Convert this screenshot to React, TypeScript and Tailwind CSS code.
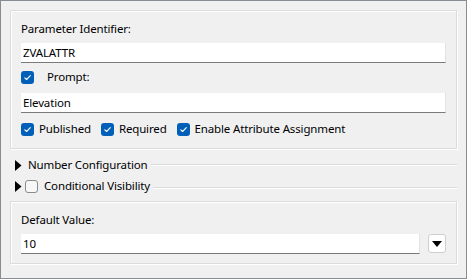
import React from "react";

const font = { fontFamily: '"Noto Sans", "Segoe UI", sans-serif' };

function Check({ checked = true }: { checked?: boolean }) {
  if (!checked) {
    return (
      <div className="w-[13px] h-[13px] rounded-[3px] border border-[#8b8b8b] bg-[#f7f7f7] shrink-0" />
    );
  }
  return (
    <div className="w-[13px] h-[13px] rounded-[3px] bg-[#005fb8] shrink-0 flex items-center justify-center">
      <svg width="9" height="9" viewBox="0 0 9 9">
        <path d="M1.8 4.8 L3.6 6.5 L7.3 2.6" fill="none" stroke="#fff" strokeWidth="1.1" strokeLinecap="round" strokeLinejoin="round" />
      </svg>
    </div>
  );
}

function Input({ value, className = "" }: { value: string; className?: string }) {
  return (
    <div
      className={`h-[20px] bg-white border-b border-b-[#7a7a7a] border-r border-r-[#e2e2e2] flex items-center pl-[2px] text-black ${className}`}
    >
      {value}
    </div>
  );
}

function Triangle() {
  return (
    <svg width="7" height="11" viewBox="0 0 7 11" className="shrink-0">
      <polygon points="0,0 6.5,5.5 0,11" fill="#000" />
    </svg>
  );
}

function Group({ children, className = "" }: { children: React.ReactNode; className?: string }) {
  return (
    <div
      className={`border border-[#dcdcdc] shadow-[inset_1px_1px_0_#ffffff,1px_1px_0_#ffffff] ${className}`}
    >
      {children}
    </div>
  );
}

export default function App() {
  return (
    <div
      style={font}
      className="w-[467px] h-[279px] bg-[#f0f0f0] border border-[#888d94] pt-[9px] px-[9px] text-[11.5px] tracking-[-0.15px] text-black leading-[16px] overflow-hidden"
    >
      <Group className="h-[139px] px-[10px] pt-[10px]">
        <div className="h-[16px] flex items-center">Parameter Identifier:</div>
        <Input value="ZVALATTR" className="mt-[6px]" />
        <div className="h-[16px] mt-[6px] flex items-center">
          <Check />
          <span className="ml-[13px]">Prompt:</span>
        </div>
        <Input value="Elevation" className="mt-[8px]" />
        <div className="h-[16px] mt-[8px] flex items-center">
          <Check />
          <span className="ml-[5px]">Published</span>
          <div className="ml-[10px]">
            <Check />
          </div>
          <span className="ml-[5px]">Required</span>
          <div className="ml-[10px]">
            <Check />
          </div>
          <span className="ml-[5px]">Enable Attribute Assignment</span>
        </div>
      </Group>

      <div className="h-[16px] mt-[8px] flex items-center pl-[5px] pr-[0px]">
        <Triangle />
        <span className="ml-[6px]">Number Configuration</span>
        <div className="flex-1 ml-[3px] h-[2px] border-t border-t-[#dcdcdc] border-b border-b-[#ffffff]" />
      </div>
      <div className="h-[16px] mt-[5px] flex items-center pl-[5px]">
        <Triangle />
        <div className="ml-[3px]">
          <Check checked={false} />
        </div>
        <span className="ml-[6px]">Conditional Visibility</span>
        <div className="flex-1 ml-[3px] h-[2px] mt-[4px] border-t border-t-[#dcdcdc] border-b border-b-[#ffffff]" />
      </div>

      <Group className="mt-[7px] h-[63px] px-[10px] pt-[10px]">
        <div className="h-[16px] flex items-center">Default Value:</div>
        <div className="mt-[6px] flex items-start">
          <Input value="10" className="flex-1" />
          <div className="ml-[8px] w-[18px] h-[19px] bg-white border border-[#cfcfcf] rounded-[3px] flex items-center justify-center">
            <svg width="10" height="6" viewBox="0 0 10 6">
              <polygon points="0,0 10,0 5,6" fill="#000" />
            </svg>
          </div>
        </div>
      </Group>
    </div>
  );
}
